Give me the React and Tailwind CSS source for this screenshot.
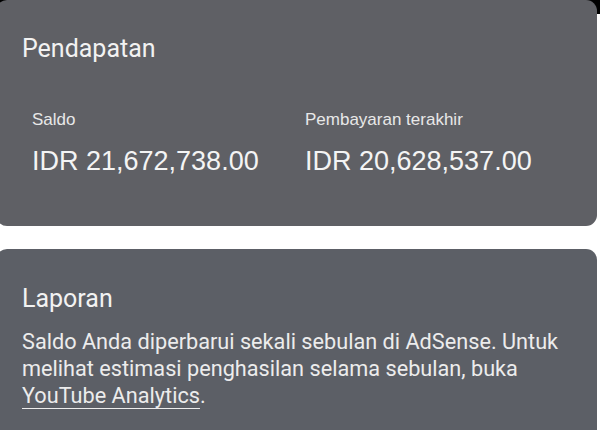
export default function App() {
  return (
    <div className="w-[600px] h-[430px] overflow-hidden bg-white">
      <div className="bg-[linear-gradient(to_bottom,#000_0,#000_14px,#fff_14px)]">
        <div className="ml-[-4px] w-[601px] h-[226px] rounded-[11px] bg-[#5f6065] pl-[26px] pt-[34px]">
          <div className="text-[25px] leading-[30px] text-[#f2f2f2]" style={{ fontFamily: "Roboto, sans-serif" }}>
            Pendapatan
          </div>
          <div className="mt-[46px] flex pl-[10px]" style={{ fontFamily: "'Liberation Sans', Arial, sans-serif" }}>
            <div className="w-[273px]">
              <div className="text-[17px] leading-[20px] text-[#e8e8e8]">Saldo</div>
              <div className="mt-[15px] text-[27px] leading-[32px] text-[#f4f4f4]">IDR 21,672,738.00</div>
            </div>
            <div>
              <div className="text-[17px] leading-[20px] text-[#e8e8e8]">Pembayaran terakhir</div>
              <div className="mt-[15px] text-[27px] leading-[32px] text-[#f4f4f4]">IDR 20,628,537.00</div>
            </div>
          </div>
        </div>
      </div>
      <div className="mt-[23px] ml-[-4px] w-[601px] h-[240px] rounded-[11px] bg-[#5c5f66] pl-[26px] pt-[35px]" style={{ fontFamily: "Roboto, sans-serif" }}>
        <div className="text-[25px] leading-[30px] text-[#f2f2f2]">Laporan</div>
        <p className="mt-[14px] w-[560px] text-[21.7px] leading-[27px] text-[#ececec]">
          Saldo Anda diperbarui sekali sebulan di AdSense. Untuk melihat estimasi penghasilan selama sebulan, buka{" "}
          <span className="whitespace-nowrap underline underline-offset-[5px] decoration-1">YouTube Analytics</span>.
        </p>
      </div>
    </div>
  );
}
